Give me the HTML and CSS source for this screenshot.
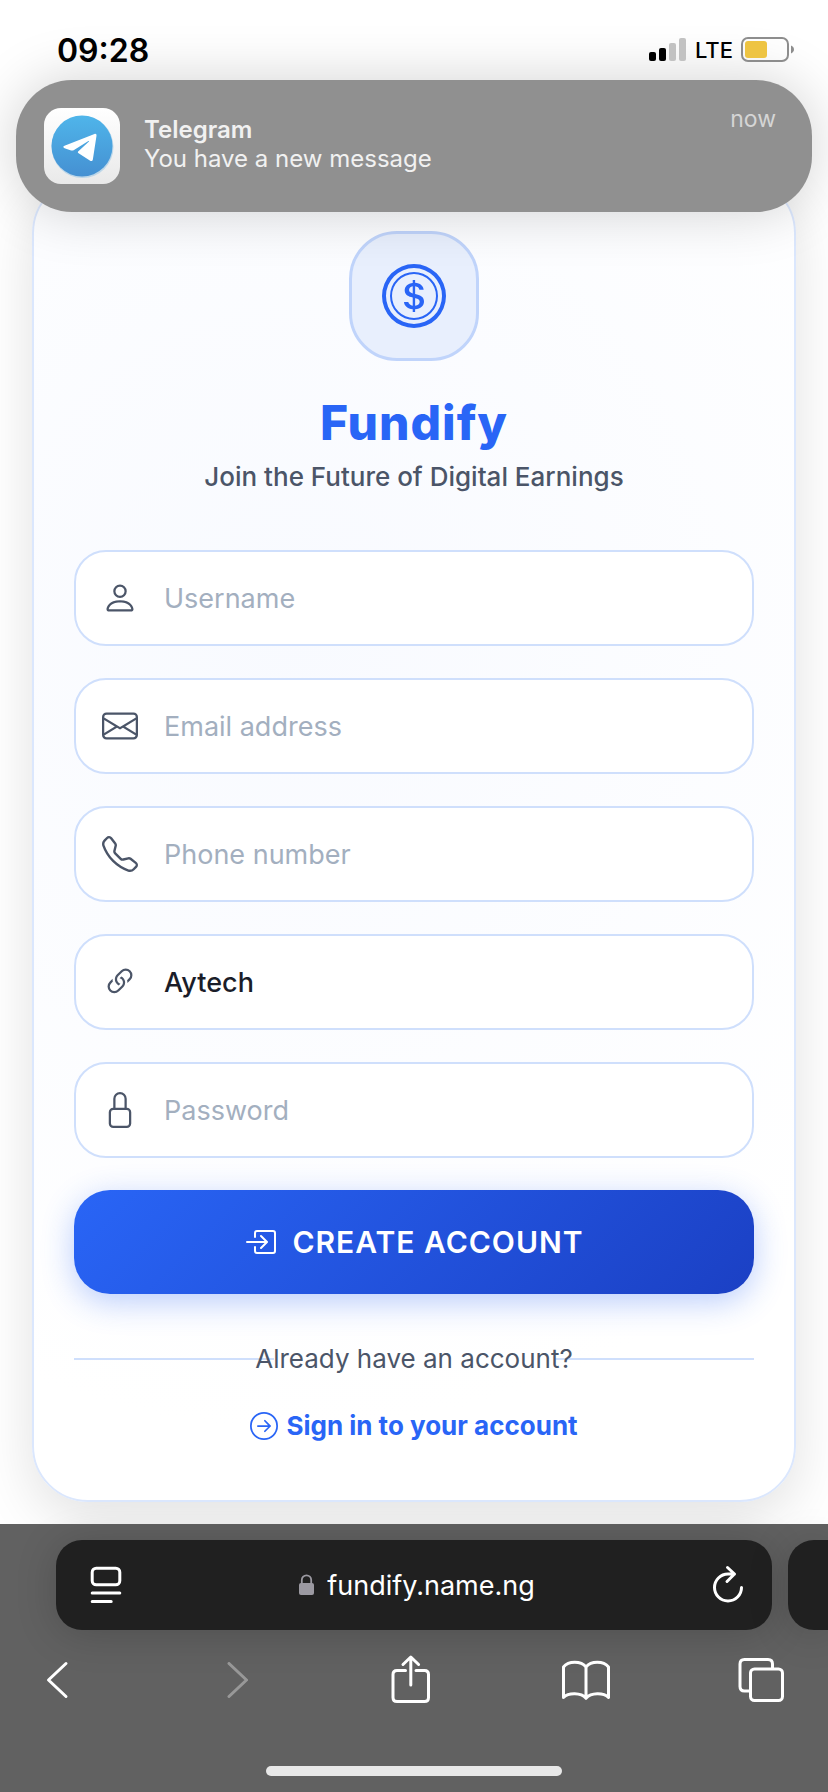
FILE: index.html
```html
<!DOCTYPE html>
<html lang="en">
<head>
<meta charset="utf-8">
<meta name="viewport" content="width=device-width, initial-scale=1">
<title>Fundify</title>
<link rel="stylesheet" href="styles.css">
</head>
<body>
<div class="screen">
  <header class="status">
    <time class="status-time">09:28</time>
    <div class="status-right">
      <svg class="signal" viewBox="0 0 38 24" aria-hidden="true">
        <rect x="0" y="14" width="7" height="9" rx="2"/>
        <rect x="10" y="10" width="7" height="13" rx="2"/>
        <rect class="dim" x="20" y="5" width="7" height="18" rx="2"/>
        <rect class="dim" x="30" y="0" width="7" height="23" rx="2"/>
      </svg>
      <span class="network">LTE</span>
      <svg class="battery" viewBox="0 0 54 26" aria-hidden="true">
        <rect x="1" y="1" width="46" height="23" rx="6" fill="none" stroke="#8d8d8d" stroke-width="2"/>
        <rect x="4" y="4" width="22" height="17" rx="3" fill="#eec442"/>
        <path d="M50 8.500c1.800.7 3 2.300 3 4s-1.200 3.300-3 4z" fill="#8d8d8d"/>
      </svg>
    </div>
  </header>

  <aside class="notice">
    <svg class="notice-icon" viewBox="0 0 76 76" aria-hidden="true">
      <defs>
        <linearGradient id="tile" x1="0" y1="0" x2="0" y2="1"><stop offset="0" stop-color="#fff"/><stop offset="1" stop-color="#e9e9e9"/></linearGradient>
        <linearGradient id="disc" x1="0" y1="0" x2="0" y2="1"><stop offset="0" stop-color="#4fb5ea"/><stop offset="1" stop-color="#4590d2"/></linearGradient>
      </defs>
      <rect width="76" height="76" rx="17" fill="url(#tile)"/>
      <circle cx="38.500" cy="39" r="31" fill="#9cc8e6" opacity=".6"/>
      <circle cx="38" cy="38" r="30.500" fill="url(#disc)"/>
      <path d="M20.500 37.800 50.500 26c1.300-.5 2.200.2 2 1.700l-3.600 23.500c-.3 1.900-1.500 2.400-3.100 1.400l-11.200-7.300c-1-.7-1-1.400-.2-2.100l10.300-9.500c.7-.7.200-1-.7-.5L30 42c-1 .6-1.800.7-2.900.4l-6.500-2.200c-1.700-.6-1.700-1.700-.1-2.400z" fill="#fff"/>
    </svg>
    <div class="notice-body">
      <strong class="notice-title">Telegram</strong>
      <span class="notice-text">You have a new message</span>
    </div>
    <span class="notice-when">now</span>
  </aside>

  <main class="page">
    <section class="card">
      <div class="logo">
        <svg class="logo-icon" viewBox="0 0 16 16" aria-hidden="true">
          <path d="M5.500 9.511c.076.954.83 1.697 2.182 1.785V12h.6v-.709c1.400-.098 2.218-.846 2.218-1.932 0-.987-.626-1.496-1.745-1.760l-.473-.112V5.570c.6.068.982.396 1.074.85h1.052c-.076-.919-.864-1.638-2.126-1.716V4h-.6v.719c-1.195.117-2.010.836-2.010 1.853 0 .9.606 1.472 1.613 1.707l.397.098v2.034c-.615-.093-1.022-.43-1.114-.9zm2.177-2.166c-.59-.137-.91-.416-.91-.836 0-.47.345-.822.915-.925v1.760zm.692 1.193c.717.166 1.048.435 1.048.91 0 .542-.412.914-1.135.982V8.518z"/>
          <path d="M8 15A7 7 0 1 1 8 1a7 7 0 0 1 0 14m0 1A8 8 0 1 0 8 0a8 8 0 0 0 0 16"/>
          <path d="M8 13.500a5.500 5.500 0 1 1 0-11 5.500 5.500 0 0 1 0 11m0 .5A6 6 0 1 0 8 2a6 6 0 0 0 0 12"/>
        </svg>
      </div>
      <h1 class="brand">Fundify</h1>
      <p class="tagline">Join the Future of Digital Earnings</p>

      <form class="form">
        <label class="field">
          <svg class="field-icon" viewBox="0 0 16 16" aria-hidden="true"><path d="M8 8a3 3 0 1 0 0-6 3 3 0 0 0 0 6m2-3a2 2 0 1 1-4 0 2 2 0 0 1 4 0m4 8c0 1-1 1-1 1H3s-1 0-1-1 1-4 6-4 6 3 6 4m-1-.004c-.001-.246-.154-.986-.832-1.664C11.516 10.680 10.289 10 8 10s-3.516.68-4.168 1.332c-.678.678-.83 1.418-.832 1.664z"/></svg>
          <input class="field-input" type="text" placeholder="Username" aria-label="Username">
        </label>
        <label class="field">
          <svg class="field-icon" viewBox="0 0 16 16" aria-hidden="true"><path d="M0 4a2 2 0 0 1 2-2h12a2 2 0 0 1 2 2v8a2 2 0 0 1-2 2H2a2 2 0 0 1-2-2zm2-1a1 1 0 0 0-1 1v.217l7 4.200 7-4.200V4a1 1 0 0 0-1-1zm13 2.383-4.708 2.825L15 11.105zm-.034 6.876-5.640-3.471L8 9.583l-1.326-.795-5.640 3.470A1 1 0 0 0 2 13h12a1 1 0 0 0 .966-.741M1 11.105l4.708-2.897L1 5.383z"/></svg>
          <input class="field-input" type="email" placeholder="Email address" aria-label="Email address">
        </label>
        <label class="field">
          <svg class="field-icon" viewBox="0 0 16 16" aria-hidden="true"><path d="M3.654 1.328a.678.678 0 0 0-1.015-.063L1.605 2.300c-.483.484-.661 1.169-.45 1.770a17.600 17.600 0 0 0 4.168 6.608 17.600 17.600 0 0 0 6.608 4.168c.601.211 1.286.033 1.770-.45l1.034-1.034a.678.678 0 0 0-.063-1.015l-2.307-1.794a.68.68 0 0 0-.58-.122l-2.190.547a1.750 1.750 0 0 1-1.657-.459L5.482 8.062a1.750 1.750 0 0 1-.46-1.657l.548-2.190a.68.68 0 0 0-.122-.58zM1.884.511a1.745 1.745 0 0 1 2.612.163L6.290 2.980c.329.423.445.974.315 1.494l-.547 2.190a.68.68 0 0 0 .178.643l2.457 2.457a.68.68 0 0 0 .644.178l2.189-.547a1.750 1.750 0 0 1 1.494.315l2.306 1.794c.829.645.905 1.870.163 2.611l-1.034 1.034c-.74.74-1.846 1.065-2.877.702a18.600 18.600 0 0 1-7.010-4.420 18.600 18.600 0 0 1-4.420-7.009c-.362-1.030-.037-2.137.703-2.877z"/></svg>
          <input class="field-input" type="tel" placeholder="Phone number" aria-label="Phone number">
        </label>
        <label class="field">
          <svg class="field-icon" viewBox="0 0 16 16" aria-hidden="true"><path d="M4.715 6.542 3.343 7.914a3 3 0 1 0 4.243 4.243l1.828-1.829A3 3 0 0 0 8.586 5.500L8 6.086a1 1 0 0 0-.154.199 2 2 0 0 1 .861 3.337L6.880 11.450a2 2 0 1 1-2.830-2.830l.793-.792a4 4 0 0 1-.128-1.287z"/><path d="M6.586 4.672A3 3 0 0 0 7.414 9.500l.775-.776a2 2 0 0 1-.896-3.346L9.120 3.550a2 2 0 1 1 2.830 2.830l-.793.792c.112.42.155.855.128 1.287l1.372-1.372a3 3 0 1 0-4.243-4.243z"/></svg>
          <input class="field-input" type="text" value="Aytech" aria-label="Referral code">
        </label>
        <label class="field">
          <svg class="field-icon" viewBox="0 0 16 16" aria-hidden="true"><path d="M8 1a2 2 0 0 1 2 2v4H6V3a2 2 0 0 1 2-2m3 6V3a3 3 0 0 0-6 0v4a2 2 0 0 0-2 2v5a2 2 0 0 0 2 2h6a2 2 0 0 0 2-2V9a2 2 0 0 0-2-2M5 8h6a1 1 0 0 1 1 1v5a1 1 0 0 1-1 1H5a1 1 0 0 1-1-1V9a1 1 0 0 1 1-1"/></svg>
          <input class="field-input" type="password" placeholder="Password" aria-label="Password">
        </label>
        <button class="submit" type="button">
          <svg class="submit-icon" viewBox="0 0 16 16" aria-hidden="true"><path d="M6 3.500a.5.5 0 0 1 .5-.5h8a.5.5 0 0 1 .5.5v9a.5.5 0 0 1-.5.5h-8a.5.5 0 0 1-.5-.5v-2a.5.5 0 0 0-1 0v2A1.500 1.500 0 0 0 6.500 14h8a1.500 1.500 0 0 0 1.500-1.500v-9A1.500 1.500 0 0 0 14.500 2h-8A1.500 1.500 0 0 0 5 3.500v2a.5.5 0 0 0 1 0z"/><path d="M11.854 8.354a.5.5 0 0 0 0-.708l-3-3a.5.5 0 1 0-.708.708L10.293 7.500H1.500a.5.5 0 0 0 0 1h8.793l-2.147 2.146a.5.5 0 0 0 .708.708z"/></svg>
          CREATE ACCOUNT
        </button>
      </form>

      <p class="divider">Already have an account?</p>
      <a class="signin" href="#">
        <svg class="signin-icon" viewBox="0 0 16 16" aria-hidden="true"><path d="M1 8a7 7 0 1 0 14 0A7 7 0 0 0 1 8m15 0A8 8 0 1 1 0 8a8 8 0 0 1 16 0M4.500 7.500a.5.5 0 0 0 0 1h5.793l-2.147 2.146a.5.5 0 0 0 .708.708l3-3a.5.5 0 0 0 0-.708l-3-3a.5.5 0 1 0-.708.708L10.293 7.500z"/></svg>
        Sign in to your account
      </a>
    </section>
  </main>

  <footer class="browser">
    <div class="tabs">
      <div class="address">
        <button class="bar-button" type="button" aria-label="Page menu">
          <svg class="bar-icon" viewBox="0 0 36 36" aria-hidden="true"><rect x="4.200" y="1.200" width="27.600" height="16.600" rx="4"/><path d="M4.200 26h27.600M4.200 34.500h19"/></svg>
        </button>
        <span class="domain">
          <svg class="lock" viewBox="0 0 16 22" aria-hidden="true"><rect x="0" y="9" width="15" height="12" rx="2" fill="#9b99a1"/><path d="M2.800 10V6a4.700 4.700 0 0 1 9.400 0v4" fill="none" stroke="#9b99a1" stroke-width="1.800"/></svg>
          fundify.name.ng
        </span>
        <button class="bar-button" type="button" aria-label="Reload">
          <svg class="bar-icon" viewBox="0 0 36 36" aria-hidden="true"><path d="M31.500 20.500A13.500 13.500 0 1 1 18 7h6.500M17.500 0.500 24.500 7l-7.500 7.500"/></svg>
        </button>
      </div>
      <div class="next-tab"></div>
    </div>
    <nav class="tools">
      <button class="tool" type="button" aria-label="Back"><svg class="tool-icon" viewBox="0 0 48 48" aria-hidden="true"><path d="M32 7.500 14.500 24 32 40.500"/></svg></button>
      <button class="tool" type="button" aria-label="Forward" disabled><svg class="tool-icon" viewBox="0 0 48 48" aria-hidden="true"><path d="M19 7.500 36.500 24 19 40.500"/></svg></button>
      <button class="tool" type="button" aria-label="Share"><svg class="tool-icon" viewBox="0 0 48 48" aria-hidden="true"><path d="M19.500 14.500H11q-4 0-4 4v23q0 4 4 4h27.500q4 0 4-4v-23q0-4-4-4H30M24.800 29V1.500M17 8.500l7.800-7.500 7.800 7.500"/></svg></button>
      <button class="tool" type="button" aria-label="Bookmarks"><svg class="tool-icon" viewBox="0 0 48 48" aria-hidden="true"><path d="M24 11C19 4.800 6.500 4.800 1.500 11v30.500c5-5 17.500-5 22.500.8 5-5.800 17.500-5.800 22.500-.8V11C41.500 4.800 29 4.800 24 11zv31"/></svg></button>
      <button class="tool" type="button" aria-label="Tabs"><svg class="tool-icon" viewBox="0 0 48 48" aria-hidden="true"><rect x="12.500" y="13" width="32" height="31.500" rx="4"/><path d="M34.500 12.500V8q0-4.500-4.500-4.500H6.500Q2 3.500 2 8v22.500Q2 35 6.500 35H12"/></svg></button>
    </nav>
    <div class="home"></div>
  </footer>
</div>
</body>
</html>
```
FILE: styles.css
```css
* { box-sizing: border-box; }

body {
  margin: 0;
  font-family: Inter, "Liberation Sans", sans-serif;
  background: #fff;
  color: #1a1d29;
}

button, input { font: inherit; }

.screen {
  position: relative;
  display: flex;
  flex-direction: column;
  min-height: 100vh;
  overflow: hidden;
}

/* Status bar */
.status {
  position: absolute;
  z-index: 3;
  inset: 0 0 auto;
  display: flex;
  justify-content: space-between;
  align-items: center;
  height: 100px;
  padding: 0 33px 0 57px;
  color: #000;
}
.status-time { font-size: 32px; font-weight: 600; }
.status-right { display: flex; align-items: center; gap: 8px; }
.network { font-size: 22px; font-weight: 500; }
.signal { width: 38px; height: 24px; }
.signal .dim { fill: #c2c2c2; }
.battery { width: 54px; height: 26px; }

/* Notification banner */
.notice {
  position: absolute;
  z-index: 2;
  top: 80px;
  left: 16px;
  right: 16px;
  display: flex;
  align-items: center;
  gap: 24px;
  padding: 28px 36px 28px 28px;
  border-radius: 56px;
  background: #909090;
  box-shadow: 0 0 56px rgba(0, 0, 0, .18);
  color: #f1f1f1;
}
.notice-icon { width: 76px; height: 76px; }
.notice-body {
  flex: 1;
  display: flex;
  flex-direction: column;
  padding-bottom: 4px;
  font-size: 24px;
  line-height: 29px;
}
.notice-title { font-weight: 600; }
.notice-when { align-self: flex-start; font-size: 23px; line-height: 22px; color: #d5d5d5; }

/* Sign-up card */
.page { flex: 1; padding: 177px 32px 22px; }
.card {
  display: flex;
  flex-direction: column;
  align-items: center;
  padding: 52px 40px 56px;
  border: 2px solid #dbe7fd;
  border-radius: 56px;
  background: radial-gradient(ellipse 760px 800px at 34% 34%, #f8faff, #fff);
  box-shadow: 0 16px 56px rgba(0, 0, 0, .12);
}
.logo {
  display: grid;
  place-items: center;
  width: 130px;
  height: 130px;
  border: 3px solid #c0d4fb;
  border-radius: 48px;
  background: #e8effd;
}
.logo-icon { width: 64px; height: 64px; fill: #2965f6; }
.brand {
  margin: 32px 0 0;
  font-size: 48px;
  line-height: 60px;
  font-weight: 800;
  letter-spacing: 1px;
  color: #2965f6;
}
.tagline { margin: 8px 0 57px; font-size: 26px; line-height: 32px; font-weight: 500; color: #4b5568; }

.form { display: flex; flex-direction: column; gap: 32px; align-self: stretch; }
.field {
  display: flex;
  align-items: center;
  gap: 26px;
  height: 96px;
  padding: 0 26px;
  border: 2px solid #cfdffc;
  border-radius: 32px;
  background: #fff;
}
.field-icon { flex: none; width: 36px; height: 36px; fill: #4b5568; }
.field-input {
  flex: 1;
  min-width: 0;
  padding: 0;
  border: 0;
  outline: 0;
  background: none;
  font-size: 27px;
  font-weight: 500;
  color: #1a1d29;
}
.field-input::placeholder { font-weight: 400; color: #a3afbf; opacity: 1; }

.submit {
  display: flex;
  justify-content: center;
  align-items: center;
  gap: 16px;
  height: 104px;
  border: 0;
  border-radius: 36px;
  background: linear-gradient(135deg, #2965f6, #1b40c4);
  box-shadow: 0 8px 32px rgba(41, 101, 246, .32);
  font-size: 30px;
  font-weight: 600;
  letter-spacing: 1px;
  color: #fff;
}
.submit-icon { width: 32px; height: 32px; fill: #fff; }

.divider {
  align-self: stretch;
  margin: 48px 0 32px;
  font-size: 26px;
  line-height: 34px;
  text-align: center;
  color: #4b5568;
  background:
    linear-gradient(#cfdffc, #cfdffc) left center / 200px 2px no-repeat,
    linear-gradient(#cfdffc, #cfdffc) right center / 200px 2px no-repeat;
}
.signin {
  display: flex;
  align-items: center;
  gap: 8px;
  font-size: 26px;
  line-height: 36px;
  font-weight: 700;
  color: #2965f6;
  text-decoration: none;
}
.signin-icon { width: 28px; height: 28px; fill: #2965f6; }

/* Browser chrome */
.browser {
  position: relative;
  display: flex;
  flex-direction: column;
  align-items: center;
  padding: 16px 0;
  background: #616161;
}
.tabs { align-self: stretch; display: flex; gap: 16px; padding-left: 56px; }
.address, .next-tab { height: 90px; background: #202020; box-shadow: 0 4px 40px rgba(0, 0, 0, .18); }
.address {
  flex: 1;
  display: flex;
  justify-content: space-between;
  align-items: center;
  padding: 0 26px 0 32px;
  border-radius: 26px;
}
.next-tab { width: 40px; border-radius: 26px 0 0 26px; }
.domain { display: flex; align-items: center; gap: 12px; font-size: 27px; color: #fff; }
.lock { width: 16px; height: 22px; }
.bar-button, .tool { display: grid; padding: 0; border: 0; background: none; }
.bar-icon { width: 36px; height: 36px; }
.tool-icon { width: 48px; height: 48px; }
.bar-icon, .tool-icon {
  fill: none;
  stroke: #fff;
  stroke-width: 3;
  stroke-linecap: round;
  stroke-linejoin: round;
  overflow: visible;
}
.tool:disabled { opacity: .35; }
.tools { align-self: stretch; display: flex; justify-content: space-between; padding: 26px 42px 62px 34px; }
.home { width: 296px; height: 10px; border-radius: 5px; background: #e8e8e8; }
```
